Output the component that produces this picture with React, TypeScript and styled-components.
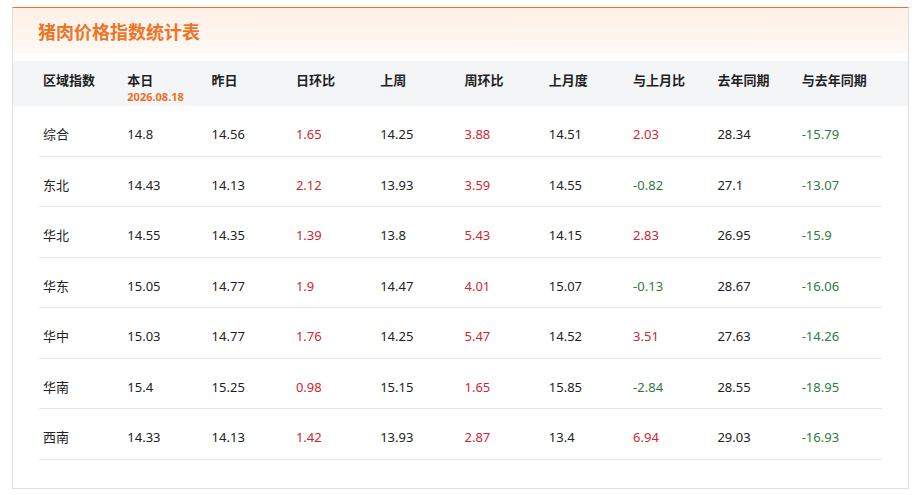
import React from "react";
import styled, { createGlobalStyle } from "styled-components";

const Global = createGlobalStyle`
  html, body { margin: 0; padding: 0; background: #ffffff; }
  body {
    font-family: "Noto Sans", "Noto Sans CJK SC", sans-serif;
    color: #222;
  }
  * { box-sizing: border-box; }
`;

const Page = styled.div`
  width: 921px;
  height: 495px;
  padding: 7px 12px 7px 12px;
`;

const Card = styled.section`
  height: 482px;
  border: 1px solid #e0e0e0;
  border-top: 1px solid #ea7530;
  background: #fff;
  display: flex;
  flex-direction: column;
`;

const TitleBar = styled.header`
  height: 45px;
  display: flex;
  align-items: center;
  padding-left: 25px;
  background: linear-gradient(to bottom, #fff0e6, #fdf9f6);
`;

const Title = styled.h1`
  margin: 0;
  font-family: "Noto Sans CJK SC", sans-serif;
  font-size: 18px;
  font-weight: 700;
  color: #ef7426;
  letter-spacing: 0;
`;

const HeadBand = styled.div`
  margin-top: 8px;
  height: 45px;
  background: #f4f5f7;
  padding: 0 26px;
`;

const Grid = styled.div`
  display: grid;
  grid-template-columns: repeat(10, 1fr);
`;

const HeadRow = styled(Grid)`
  height: 100%;
  padding-top: 10px;
`;

const HeadCell = styled.div`
  padding-left: 4px;
  font-family: "Noto Sans CJK SC", sans-serif;
  font-size: 13px;
  font-weight: 700;
  line-height: 18px;
  color: #1f1f1f;
  display: flex;
  flex-direction: column;
`;

const DateTag = styled.span`
  font-family: "Noto Sans", sans-serif;
  font-size: 11px;
  line-height: 15px;
  font-weight: 700;
  color: #ee6f1f;
`;

const Body = styled.div`
  padding: 0 26px;
`;

const Row = styled(Grid)`
  height: 50.5px;
  padding-top: 20px;
  border-bottom: 1px solid #e8e8e8;
`;

type Tone = "plain" | "up" | "down";

const Cell = styled.div<{ $tone: Tone }>`
  padding-left: 4px;
  font-family: "Noto Sans", "Noto Sans CJK SC", sans-serif;
  font-size: 13px;
  line-height: 17px;
  color: ${(p) =>
    p.$tone === "up" ? "#d2262f" : p.$tone === "down" ? "#2b7d3a" : "#222"};
`;

const headers = [
  "区域指数",
  "本日",
  "昨日",
  "日环比",
  "上周",
  "周环比",
  "上月度",
  "与上月比",
  "去年同期",
  "与去年同期",
];

const rows: string[][] = [
  ["综合", "14.8", "14.56", "1.65", "14.25", "3.88", "14.51", "2.03", "28.34", "-15.79"],
  ["东北", "14.43", "14.13", "2.12", "13.93", "3.59", "14.55", "-0.82", "27.1", "-13.07"],
  ["华北", "14.55", "14.35", "1.39", "13.8", "5.43", "14.15", "2.83", "26.95", "-15.9"],
  ["华东", "15.05", "14.77", "1.9", "14.47", "4.01", "15.07", "-0.13", "28.67", "-16.06"],
  ["华中", "15.03", "14.77", "1.76", "14.25", "5.47", "14.52", "3.51", "27.63", "-14.26"],
  ["华南", "15.4", "15.25", "0.98", "15.15", "1.65", "15.85", "-2.84", "28.55", "-18.95"],
  ["西南", "14.33", "14.13", "1.42", "13.93", "2.87", "13.4", "6.94", "29.03", "-16.93"],
];

const ratioCols = new Set([3, 5, 7, 9]);

function toneOf(col: number, v: string): Tone {
  if (!ratioCols.has(col)) return "plain";
  return v.startsWith("-") ? "down" : "up";
}

export default function App() {
  return (
    <>
      <Global />
      <Page>
        <Card>
          <TitleBar>
            <Title>猪肉价格指数统计表</Title>
          </TitleBar>
          <HeadBand>
            <HeadRow>
              {headers.map((h, i) => (
                <HeadCell key={h}>
                  {h}
                  {i === 1 && <DateTag>2026.08.18</DateTag>}
                </HeadCell>
              ))}
            </HeadRow>
          </HeadBand>
          <Body>
            {rows.map((r) => (
              <Row key={r[0]}>
                {r.map((v, i) => (
                  <Cell key={i} $tone={toneOf(i, v)}>
                    {v}
                  </Cell>
                ))}
              </Row>
            ))}
          </Body>
        </Card>
      </Page>
    </>
  );
}
